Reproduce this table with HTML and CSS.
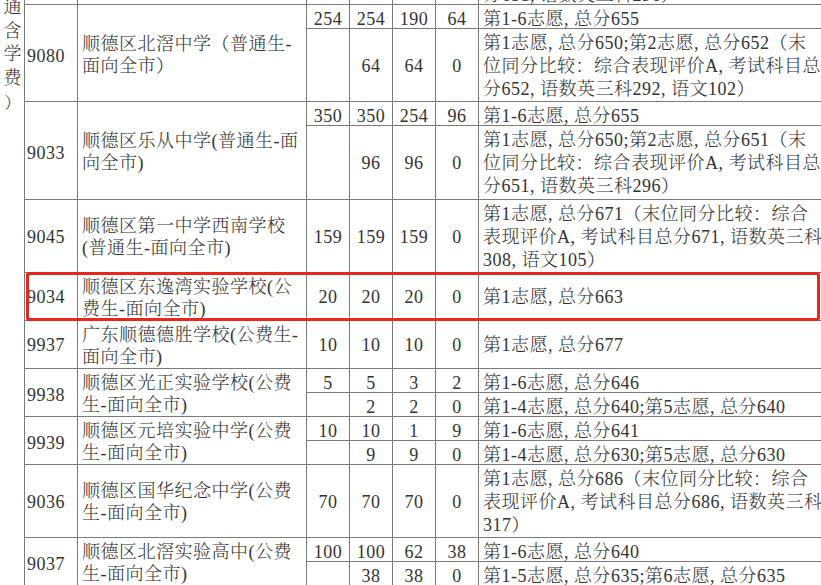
FILE: index.html
```html
<!DOCTYPE html>
<html lang="zh-CN">
<head>
<meta charset="utf-8">
<title>顺德区录取分数</title>
<link rel="stylesheet" href="styles.css">
</head>
<body>
<div class="wrap">
  <table class="tbl">
    <colgroup>
      <col class="w0"><col class="w1"><col class="w2"><col class="w3"><col class="w3"><col class="w3"><col class="w3"><col class="w7">
    </colgroup>
    <tbody>
      <tr class="s">
        <td class="side" rowspan="15"><div class="vert"><span>通</span><span>含</span><span>学</span><span>费</span><span class="par">）</span></div></td>
        <td class="c"></td><td class="nm"></td>
        <td class="n"></td><td class="n"></td><td class="n"></td><td class="n"></td>
        <td class="t">分651, 语数英三科296）</td>
      </tr>

      <tr class="s">
        <td class="c" rowspan="2">9080</td>
        <td class="nm" rowspan="2">顺德区北滘中学（普通生-<br>面向全市）</td>
        <td class="n">254</td><td class="n">254</td><td class="n">190</td><td class="n">64</td>
        <td class="t">第1-6志愿, 总分655</td>
      </tr>
      <tr class="m">
        <td class="n"></td><td class="n">64</td><td class="n">64</td><td class="n">0</td>
        <td class="t">第1志愿, 总分650;第2志愿, 总分652（末<br>位同分比较：综合表现评价A, 考试科目总<br>分652, 语数英三科292, 语文102）</td>
      </tr>

      <tr class="s">
        <td class="c" rowspan="2">9033</td>
        <td class="nm" rowspan="2">顺德区乐从中学(普通生-面<br>向全市)</td>
        <td class="n">350</td><td class="n">350</td><td class="n">254</td><td class="n">96</td>
        <td class="t">第1-6志愿, 总分655</td>
      </tr>
      <tr class="m">
        <td class="n"></td><td class="n">96</td><td class="n">96</td><td class="n">0</td>
        <td class="t">第1志愿, 总分650;第2志愿, 总分651（末<br>位同分比较：综合表现评价A, 考试科目总<br>分651, 语数英三科296）</td>
      </tr>

      <tr class="m">
        <td class="c">9045</td>
        <td class="nm">顺德区第一中学西南学校<br>(普通生-面向全市)</td>
        <td class="n">159</td><td class="n">159</td><td class="n">159</td><td class="n">0</td>
        <td class="t">第1志愿, 总分671（末位同分比较：综合<br>表现评价A, 考试科目总分671, 语数英三科<br>308, 语文105）</td>
      </tr>

      <tr>
        <td class="c">9034</td>
        <td class="nm">顺德区东逸湾实验学校(公<br>费生-面向全市)</td>
        <td class="n">20</td><td class="n">20</td><td class="n">20</td><td class="n">0</td>
        <td class="t">第1志愿, 总分663</td>
      </tr>

      <tr>
        <td class="c">9937</td>
        <td class="nm">广东顺德德胜学校(公费生-<br>面向全市)</td>
        <td class="n">10</td><td class="n">10</td><td class="n">10</td><td class="n">0</td>
        <td class="t">第1志愿, 总分677</td>
      </tr>

      <tr class="s">
        <td class="c" rowspan="2">9938</td>
        <td class="nm" rowspan="2">顺德区光正实验学校(公费<br>生-面向全市)</td>
        <td class="n">5</td><td class="n">5</td><td class="n">3</td><td class="n">2</td>
        <td class="t">第1-6志愿, 总分646</td>
      </tr>
      <tr class="s">
        <td class="n"></td><td class="n">2</td><td class="n">2</td><td class="n">0</td>
        <td class="t">第1-4志愿, 总分640;第5志愿, 总分640</td>
      </tr>

      <tr class="s">
        <td class="c" rowspan="2">9939</td>
        <td class="nm" rowspan="2">顺德区元培实验中学(公费<br>生-面向全市)</td>
        <td class="n">10</td><td class="n">10</td><td class="n">1</td><td class="n">9</td>
        <td class="t">第1-6志愿, 总分641</td>
      </tr>
      <tr class="s">
        <td class="n"></td><td class="n">9</td><td class="n">9</td><td class="n">0</td>
        <td class="t">第1-4志愿, 总分630;第5志愿, 总分630</td>
      </tr>

      <tr class="m">
        <td class="c">9036</td>
        <td class="nm">顺德区国华纪念中学(公费<br>生-面向全市)</td>
        <td class="n">70</td><td class="n">70</td><td class="n">70</td><td class="n">0</td>
        <td class="t">第1志愿, 总分686（末位同分比较：综合<br>表现评价A, 考试科目总分686, 语数英三科<br>317）</td>
      </tr>

      <tr class="s">
        <td class="c" rowspan="2">9037</td>
        <td class="nm" rowspan="2">顺德区北滘实验高中(公费<br>生-面向全市)</td>
        <td class="n">100</td><td class="n">100</td><td class="n">62</td><td class="n">38</td>
        <td class="t">第1-6志愿, 总分640</td>
      </tr>
      <tr class="s">
        <td class="n"></td><td class="n">38</td><td class="n">38</td><td class="n">0</td>
        <td class="t">第1-5志愿, 总分635;第6志愿, 总分635</td>
      </tr>
    </tbody>
  </table>
  <div class="mark"></div>
</div>
</body>
</html>
```

FILE: styles.css
```css
html, body {
  margin: 0;
  padding: 0;
  overflow: hidden;
  background: #ffffff;
}

.wrap {
  position: relative;
  width: 840px;
  margin: -20px 0 0 -10px;
}

.tbl {
  border-collapse: collapse;
  table-layout: fixed;
  width: 840px;
  font-family: "Liberation Serif", "Noto Serif CJK SC", "Noto Sans CJK SC", serif;
  font-size: 18px;
  letter-spacing: 0.5px;
  font-weight: 300;
  color: #333333;
}

.w0 { width: 34px; }
.w1 { width: 53px; }
.w2 { width: 229px; }
.w3 { width: 43px; }
.w7 { width: 352px; }

.tbl td {
  border: 1px solid #7a7a7a;
  padding: 3px 0 0 0;
  vertical-align: middle;
  white-space: nowrap;
  overflow: hidden;
  line-height: 23.1px;
}

.s td {
  padding-top: 6px;
  line-height: 17px;
}

.tbl .n {
  text-align: center;
}

.tbl .c {
  padding-left: 2px;
}

.tbl .nm {
  padding-top: 3px;
  padding-left: 4px;
  line-height: 22px;
}

.tbl .t {
  padding-left: 4px;
}

.tbl .side {
  vertical-align: top;
  padding: 15px 0 0 10px;
  border-left-color: transparent;
}

.vert {
  display: flex;
  flex-direction: column;
  align-items: center;
  font-size: 18px;
  letter-spacing: 0;
  line-height: 23.7px;
}

.par {
  font-size: 16px;
}

.mark {
  position: absolute;
  left: 36px;
  top: 292px;
  width: 794px;
  height: 49px;
  box-sizing: border-box;
  border: 3px solid #e8261e;
  border-radius: 3px;
}
```
